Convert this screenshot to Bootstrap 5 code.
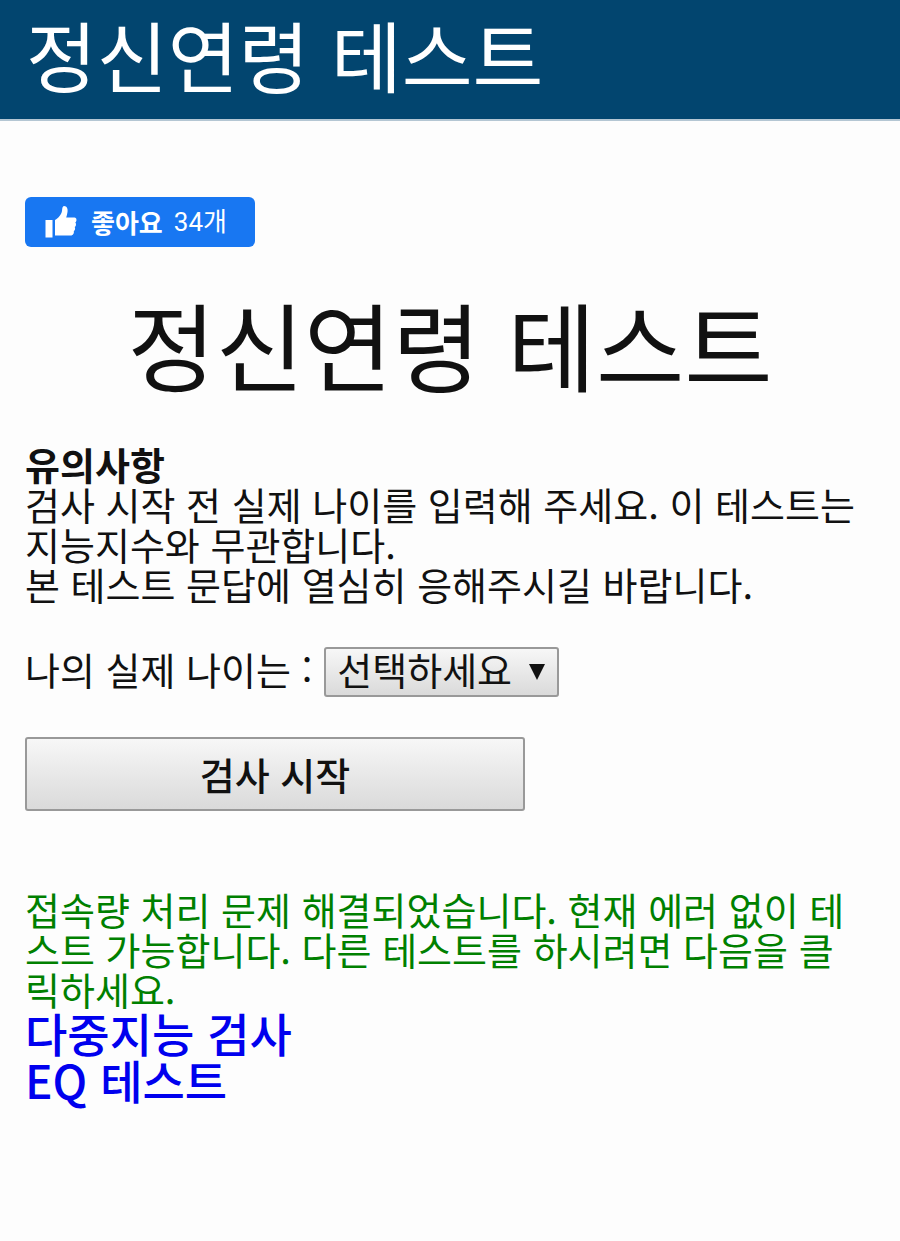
<!DOCTYPE html>
<html lang="ko">
<head>
<meta charset="utf-8">
<meta name="viewport" content="width=device-width, initial-scale=1">
<title>정신연령 테스트</title>
<link rel="stylesheet" href="https://cdn.jsdelivr.net/npm/bootstrap@5.3.0/dist/css/bootstrap.min.css">
<style>
body{font-family:"Noto Sans CJK KR",sans-serif;font-size:38px;line-height:40px;color:#111;background:#fdfdfd}
.site-bar{background:#02456f;padding:0 26px 11px;border-bottom:2px solid #b4c6d3}
.site-title{font-size:77px;line-height:108px;color:#fff}
.page-body{padding:76px 25px 40px}
.like-btn{background:#1877f2;color:#fff;border:0;border-radius:6px;height:50px;width:230px;font-size:26px;line-height:50px;padding:0 19px}
.like-btn svg{width:34px;height:34px;margin-right:13px}
.like-label{margin-right:11px}
.like-count{font-family:Roboto,"Noto Sans CJK KR",sans-serif}
.test-title{font-size:96px;line-height:120px;margin:36px 0 41px;font-weight:400}
.guide-title{font-weight:600}
.native-look{border:2px solid #999;border-radius:3px;background:linear-gradient(#f7f7f7,#dadada);color:#111}
.age-row{gap:12px;margin:43px 0 40px}
.age-row label{padding-bottom:6px}
.age-select{appearance:none;height:50px;width:235px;padding:0 11px 6px;font-size:38px;line-height:40px}
.age-arrow{top:17px;right:14px;width:16px;height:16px;pointer-events:none}
.start-btn{width:500px;max-width:100%;height:74px;font-size:38px;line-height:60px;font-weight:500}
.notice-text{color:#008000;margin-top:78px}
.more-tests{font-size:46px;line-height:47px;font-weight:500}
.more-tests a{color:#00e;text-decoration:none}
</style>
</head>
<body>
<header class="site-bar"><a href="#" class="site-title d-block text-decoration-none">정신연령 테스트</a></header>
<main class="page-body">
<button type="button" class="like-btn d-flex align-items-center">
<svg viewBox="0 0 34 34" fill="#fff" aria-hidden="true"><path d="M1.500 15h7v17.500H1.500zM11 15c3.500-2 6.500-5.500 7-9 .2-2.800.5-5 2-5 3 0 4 3 3.500 6-.3 2-.8 4-1.300 5.500H30.500c2.500 0 2.500 4 .8 5 1.200 1.200.8 3.800-.6 4.500.9 1.500.2 3.500-.9 4 .5 2.300-.8 4.500-3 4.500H11z"/></svg>
<span class="like-label fw-bold">좋아요</span><span class="like-count">34개</span></button>
<h1 class="test-title text-center">정신연령 테스트</h1>
<p class="mb-0"><strong class="guide-title">유의사항</strong><br>검사 시작 전 실제 나이를 입력해 주세요. 이 테스트는 지능지수와 무관합니다.<br>본 테스트 문답에 열심히 응해주시길 바랍니다.</p>
<form>
<div class="age-row d-flex flex-wrap align-items-center">
<label for="age">나의 실제 나이는 :</label>
<div class="position-relative">
<select id="age" class="native-look age-select d-block"><option>선택하세요</option></select>
<svg class="age-arrow position-absolute" viewBox="0 0 16 16" fill="#111" aria-hidden="true"><path d="M0 0h16L8 16z"/></svg>
</div>
</div>
<button type="button" class="native-look start-btn d-block">검사 시작</button>
</form>
<p class="notice-text mb-0 pe-3">접속량 처리 문제 해결되었습니다. 현재 에러 없이 테스트 가능합니다. 다른 테스트를 하시려면 다음을 클릭하세요.</p>
<div class="more-tests"><a href="#">다중지능 검사</a><br><a href="#">EQ 테스트</a></div>
</main>
<script src="https://cdn.jsdelivr.net/npm/bootstrap@5.3.0/dist/js/bootstrap.bundle.min.js"></script>
</body>
</html>
